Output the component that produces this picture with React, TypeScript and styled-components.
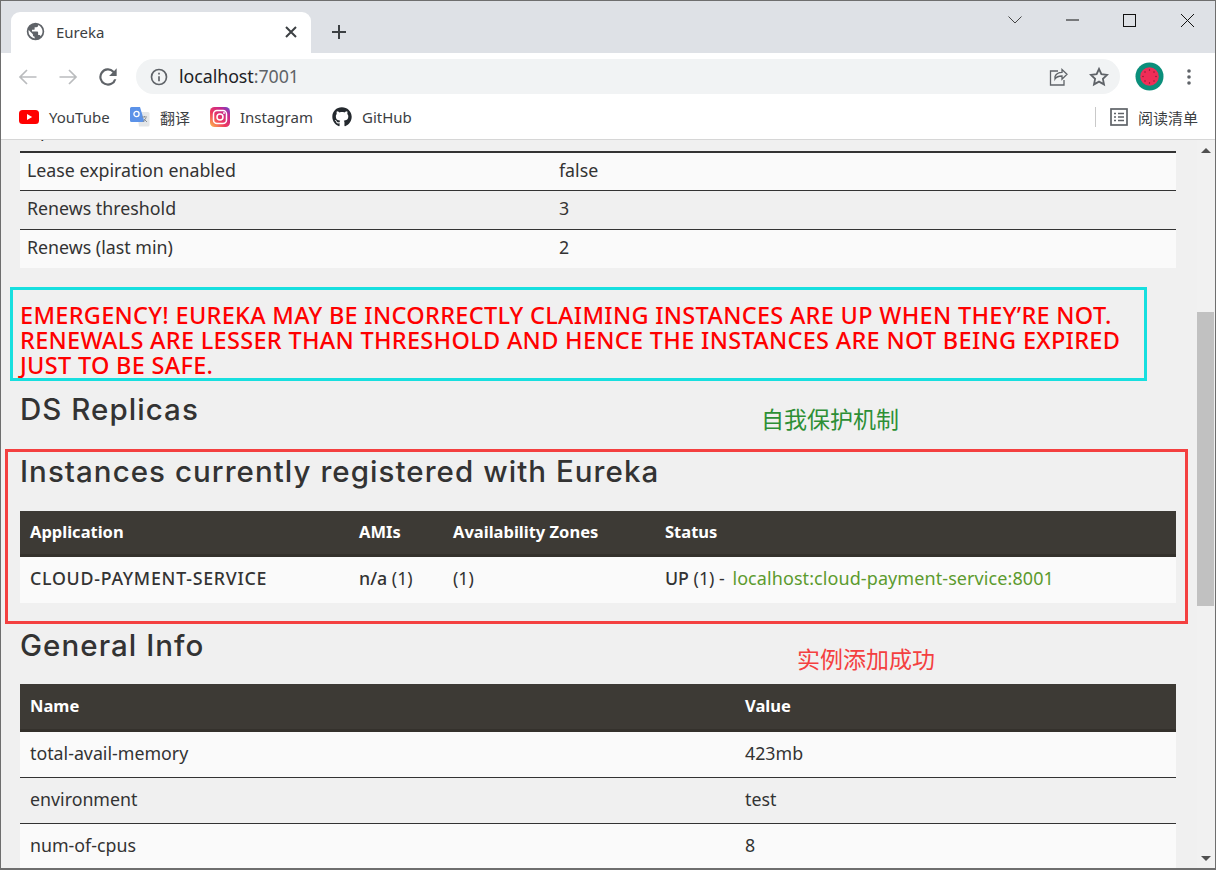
import React from "react";
import styled, { createGlobalStyle } from "styled-components";
import { FaGithub } from "react-icons/fa";

const Global = createGlobalStyle`
  html, body { margin: 0; padding: 0; height: 100%; overflow: hidden; background: #dee1e6; }
  * { box-sizing: border-box; }
`;
const UI = `"Noto Sans", "Noto Sans CJK SC", sans-serif`;
const BODY = `"Noto Sans", "Noto Sans CJK SC", sans-serif`;
const HEAD = `Inter, "Noto Sans", sans-serif`;

const Win = styled.div`
  width: 1216px; height: 870px; display: flex; flex-direction: column;
  border: 1px solid #6e6e6e; border-bottom-width: 2px; overflow: hidden; background: #fff;
`;
const TitleBar = styled.div`
  height: 52px; flex: none; background: #dee1e6; display: flex; align-items: flex-end; padding-left: 10px;
`;
const Tab = styled.div`
  width: 300px; height: 41px; background: #fff; border-radius: 9px 9px 0 0; display: flex; align-items: center;
  padding: 0 14px 2px 14px; gap: 10px; font: 15px ${UI}; color: #3c4043;
`;
const TabTitle = styled.span`flex: 1;`;
const NewTab = styled.div`width: 26px; height: 41px; margin-left: 15px; display: flex; align-items: center; justify-content: center; padding-bottom: 1px;`;
const Spacer = styled.div`flex: 1;`;
const WinControls = styled.div`align-self: flex-start; display: flex; height: 38px; align-items: center; margin-right: -1px;`;
const WinBtn = styled.div`width: 57.5px; height: 38px; display: flex; align-items: center; justify-content: center;`;

const Toolbar = styled.div`
  height: 47px; flex: none; background: #fff; display: flex; align-items: flex-start; padding: 6px 14px 0 0;
`;
const NavBtn = styled.div`width: 40px; height: 35px; display: flex; align-items: center; justify-content: center; flex: none;`;
const NavGroup = styled.div`display: flex; padding-left: 7px; width: 135px; flex: none;`;
const Omni = styled.div`
  width: 984px; height: 35px; border-radius: 18px; background: #f1f3f4; display: flex; align-items: center; padding: 0 1px 0 13px; flex: none;
`;
const Url = styled.div`font: 17.8px ${UI}; color: #202124; margin-left: 10px; padding-bottom: 1px; flex: 1; letter-spacing: -0.05px;`;
const Port = styled.span`color: #5f6368;`;
const OmniIcon = styled.div`width: 40px; height: 24px; display: flex; align-items: center; justify-content: center;`;
const Avatar = styled.div`margin-left: 15px; width: 29px; height: 35px; display: flex; align-items: center;`;
const Kebab = styled.div`margin-left: 23px; height: 35px; display: flex; align-items: center;`;

const Bookmarks = styled.div`
  height: 40px; flex: none; background: #fff; border-bottom: 1px solid #d6d6d6; display: flex; align-items: flex-start; padding: 5px 0 0 18px;
`;
const Mark = styled.div<{ $w: number }>`
  width: ${(p) => p.$w}px; display: flex; align-items: center; gap: 10px; height: 24px; font: 15px ${UI}; color: #3c4043; flex: none;
`;
const ReadSep = styled.div`width: 1px; height: 20px; background: #c9c9c9; margin: 2px 14px 0 0;`;
const ReadLabel = styled.div`display: flex; align-items: center; gap: 10px; font: 15px ${UI}; color: #3c4043; height: 24px; margin-right: 17px;`;

const Body = styled.div`flex: 1; min-height: 0; display: flex; position: relative; background: #f0f0f0;`;
const Page = styled.div`flex: 1; min-width: 0; overflow: hidden; padding: 0 20px 0 19px; background: #f0f0f0; color: #333;`;
const Scrollbar = styled.div`width: 18px; flex: none; background: #f1f1f1; display: flex; flex-direction: column; align-items: flex-start; padding-top: 8px;`;
const Thumb = styled.div`width: 17px; height: 294px; background: #c1c1c1; margin-top: 159px;`;
const Arrow = styled.div<{ $down?: boolean }>`
  width: 0; height: 0; margin-left: 4px; border-left: 5px solid transparent; border-right: 5px solid transparent;
  ${(p) => (p.$down ? "border-top: 5px solid #505050; margin-top: 250px;" : "border-bottom: 5px solid #505050;")}
`;

const Table = styled.table<{ $pull?: number }>`
  width: 1156px; border-collapse: separate; border-spacing: 0; table-layout: fixed; font: 17.8px ${BODY}; margin-top: ${(p) => p.$pull ?? 0}px;
`;
const Col = styled.col<{ $w?: number }>`${(p) => (p.$w ? `width: ${p.$w}px;` : "")}`;
const Th = styled.th<{ $h: number }>`
  height: ${(p) => p.$h}px; background: #3d3a35; color: #fff; text-align: left; padding: 0 10px 2px; font-weight: 700; border-bottom: 3px solid #34312c; font-size: 16.5px;
`;
const Row = styled.tr<{ $even?: boolean }>`background: ${(p) => (p.$even ? "#f0f0f0" : "#fafafa")};`;
const Td = styled.td<{ $h: number; $b?: number }>`
  height: ${(p) => p.$h}px; padding: 0 7px 4px; border-bottom: ${(p) => p.$b ?? 0}px solid #333; color: #333;
`;
const Cell = styled.td<{ $h: number; $b?: number }>`
  height: ${(p) => p.$h}px; padding: 0 10px 4px; border-bottom: ${(p) => p.$b ?? 0}px solid #333; color: #333;
`;
const B = styled.b`font-weight: 500;`;
const Svc = styled.b`font-weight: 500; letter-spacing: 0.75px;`;
const Link = styled.a`color: #5c9a2e; font-size: 18px; margin-left: 3px; letter-spacing: 0.08px;`;

const Alert = styled.div`
  margin-top: 35px; font: 500 23.5px/25px ${BODY}; letter-spacing: 0.3px; color: #f00; text-transform: uppercase; white-space: nowrap;
`;
const H = styled.h2<{ $mt: number }>`
  margin: ${(p) => p.$mt}px 0 0; font: 500 29.5px/40px ${HEAD}; letter-spacing: 1.05px; color: #333;
`;
const Frame = styled.div<{ $c: string; $x: number; $y: number; $w: number; $h: number }>`
  position: absolute; left: ${(p) => p.$x}px; top: ${(p) => p.$y}px; width: ${(p) => p.$w}px; height: ${(p) => p.$h}px; border: 3px solid ${(p) => p.$c}; pointer-events: none;
`;
const Note = styled.div<{ $c: string; $x: number; $y: number }>`
  position: absolute; left: ${(p) => p.$x}px; top: ${(p) => p.$y}px; color: ${(p) => p.$c}; font: 23px/30px "Noto Sans CJK SC", sans-serif; white-space: nowrap;
`;

const Globe = () => (
  <svg width="21" height="21" viewBox="0 0 24 24"><path fill="#5f6368" d="M12 2a10 10 0 1 0 0 20 10 10 0 0 0 0-20zm-1 17.900A8 8 0 0 1 4 12c0-.6.1-1.200.2-1.800L9 15v1c0 1.100.9 2 2 2v1.900zm6.900-2.500c-.3-.8-1-1.400-1.900-1.400h-1v-3c0-.6-.4-1-1-1H8v-2h2c.6 0 1-.4 1-1V7h2c1.100 0 2-.9 2-2v-.4a8 8 0 0 1 2.900 12.800z" /></svg>
);
const Stroke = ({ d, c = "#5f6368", s = 18, w = 2 }: { d: string; c?: string; s?: number; w?: number }) => (
  <svg width={s} height={s} viewBox="0 0 24 24" fill="none" stroke={c} strokeWidth={w}><path d={d} /></svg>
);

export default function App() {
  return (
    <Win>
      <Global />
      <TitleBar>
        <Tab>
          <Globe />
          <TabTitle>Eureka</TabTitle>
          <svg width="12" height="12" viewBox="0 0 12 12" stroke="#3c4043" strokeWidth="2"><path d="M1 1l10 10M11 1L1 11" /></svg>
        </Tab>
        <NewTab>
          <svg width="16" height="16" viewBox="0 0 16 16" stroke="#3c4043" strokeWidth="2"><path d="M8 1v14M1 8h14" /></svg>
        </NewTab>
        <Spacer />
        <WinControls>
          <WinBtn><svg width="14" height="8" viewBox="0 0 14 8" fill="none" stroke="#444" strokeWidth="1"><path d="M.5.5L7 7 13.500.5" /></svg></WinBtn>
          <WinBtn><svg width="13" height="2" viewBox="0 0 13 2" stroke="#111" strokeWidth="1"><path d="M0 1h13" /></svg></WinBtn>
          <WinBtn><svg width="13" height="13" viewBox="0 0 13 13" fill="none" stroke="#111" strokeWidth="1"><rect x=".5" y=".5" width="12" height="12" /></svg></WinBtn>
          <WinBtn><svg width="13" height="13" viewBox="0 0 13 13" stroke="#111" strokeWidth="1"><path d="M0 0l13 13M13 0L0 13" /></svg></WinBtn>
        </WinControls>
      </TitleBar>
      <Toolbar>
        <NavGroup>
          <NavBtn><Stroke c="#babcbe" s={24} w={1.700} d="M20.500 12H4M11 5l-7 7 7 7" /></NavBtn>
          <NavBtn><Stroke c="#babcbe" s={24} w={1.700} d="M3.500 12H20M13 5l7 7-7 7" /></NavBtn>
          <NavBtn><svg width="26" height="26" viewBox="0 0 24 24"><path fill="#5f6368" d="M17.650 6.350A8 8 0 1 0 19.730 14h-2.080a6 6 0 1 1-1.410-6.240L13 11h7V4l-2.350 2.350z" /></svg></NavBtn>
        </NavGroup>
        <Omni>
          <svg width="20" height="20" viewBox="0 0 24 24"><path fill="#5f6368" d="M11 7h2v2h-2zm0 4h2v6h-2zm1-9a10 10 0 1 0 0 20 10 10 0 0 0 0-20zm0 18a8 8 0 1 1 0-16 8 8 0 0 1 0 16z" /></svg>
          <Url>localhost<Port>:7001</Port></Url>
          <OmniIcon>
            <svg width="20" height="20" viewBox="0 0 20 20" fill="none" stroke="#5f6368" strokeWidth="1.300"><path d="M6 9.500c1.200-3 3.600-4.200 7-4.200V2.500l5 4.800-5 4.800V9c-3.200 0-5.500.6-7 3zM9 4H1.500v14H15V13" /></svg>
          </OmniIcon>
          <OmniIcon>
            <svg width="24" height="24" viewBox="0 0 24 24" fill="none" stroke="#5f6368" strokeWidth="1.800"><path d="M12 4l2.400 5.200 5.600.7-4.100 3.900 1.100 5.600-5-2.800-5 2.800 1.100-5.600L4 9.900l5.600-.7z" /></svg>
          </OmniIcon>
        </Omni>
        <Avatar>
          <svg width="29" height="29" viewBox="0 0 29 29"><circle cx="14.500" cy="14.500" r="14" fill="#0b8f7b" /><circle cx="14.500" cy="14.500" r="9.300" fill="#f02d57" /><g fill="#7a1730"><circle cx="14.500" cy="8" r=".7" /><circle cx="14.500" cy="21" r=".7" /><circle cx="8" cy="14.500" r=".7" /><circle cx="21" cy="14.500" r=".7" /><circle cx="10" cy="10" r=".7" /><circle cx="19" cy="10" r=".7" /><circle cx="10" cy="19" r=".7" /><circle cx="19" cy="19" r=".7" /></g></svg>
        </Avatar>
        <Kebab>
          <svg width="4" height="16" viewBox="0 0 4 16" fill="#5f6368"><circle cx="2" cy="2" r="1.800" /><circle cx="2" cy="8" r="1.800" /><circle cx="2" cy="14" r="1.800" /></svg>
        </Kebab>
      </Toolbar>
      <Bookmarks>
        <Mark $w={111}>
          <svg width="20" height="14" viewBox="0 0 20 14"><rect width="20" height="14" rx="3.500" fill="#f00" /><path d="M8 4l5.200 3L8 10z" fill="#fff" /></svg>
          YouTube
        </Mark>
        <Mark $w={80}>
          <svg width="20" height="20" viewBox="0 0 20 20"><path d="M7 5h11a1.500 1.500 0 0 1 1.500 1.500V18a1.500 1.500 0 0 1-1.500 1.500H9z" fill="#e4e6e8" /><path d="M1.500 0H10l4.500 15H1.500A1.500 1.500 0 0 1 0 13.500V1.500A1.500 1.500 0 0 1 1.500 0z" fill="#5b92e8" /><circle cx="6.500" cy="7" r="2.600" fill="none" stroke="#fff" strokeWidth="1.300" /><path d="M12 10h5M14.500 9v1M13 15l3-4M14 12l3 3" stroke="#8a8f94" strokeWidth="1" fill="none" /></svg>
          翻译
        </Mark>
        <Mark $w={122}>
          <svg width="20" height="20" viewBox="0 0 20 20"><defs><linearGradient id="ig" x1="0" y1="1" x2="1" y2="0"><stop offset="0" stopColor="#fdc04f" /><stop offset=".4" stopColor="#ef3a5d" /><stop offset=".75" stopColor="#c3268f" /><stop offset="1" stopColor="#5a51d3" /></linearGradient></defs><rect width="20" height="20" rx="4.500" fill="url(#ig)" /><rect x="3.500" y="3.500" width="13" height="13" rx="3.500" fill="none" stroke="#fff" strokeWidth="1.500" /><circle cx="10" cy="10" r="3" fill="none" stroke="#fff" strokeWidth="1.500" /><circle cx="14" cy="6" r=".9" fill="#fff" /></svg>
          Instagram
        </Mark>
        <Mark $w={120}>
          <FaGithub size={20} color="#24292e" />
          GitHub
        </Mark>
        <Spacer />
        <ReadSep />
        <ReadLabel>
          <svg width="18" height="18" viewBox="0 0 18 18" fill="none" stroke="#5f6368" strokeWidth="1.700"><rect x="1" y="1" width="16" height="16" /><path d="M4 5.500h2M8 5.500h6M4 9h2M8 9h6M4 12.500h2M8 12.500h6" /></svg>
          阅读清单
        </ReadLabel>
      </Bookmarks>
      <Body>
        <Page>
          <Table $pull={-27}>
            <colgroup><Col $w={529} /><Col /></colgroup>
            <tbody>
              <Row $even><Td $h={40} $b={2}>Uptime</Td><Cell $h={40} $b={2}>00:03</Cell></Row>
              <Row><Td $h={38} $b={1}>Lease expiration enabled</Td><Cell $h={38} $b={1}>false</Cell></Row>
              <Row $even><Td $h={39} $b={1}>Renews threshold</Td><Cell $h={39} $b={1}>3</Cell></Row>
              <Row><Td $h={38}>Renews (last min)</Td><Cell $h={38}>2</Cell></Row>
            </tbody>
          </Table>
          <Alert>
            Emergency! Eureka may be incorrectly claiming instances are UP when they’re not.<br />
            Renewals are lesser than threshold and hence the instances are not being expired<br />
            just to be safe.
          </Alert>
          <H $mt={11}>DS Replicas</H>
          <H $mt={22}>Instances currently registered with Eureka</H>
          <Table $pull={20}>
            <colgroup><Col $w={329} /><Col $w={94} /><Col $w={212} /><Col /></colgroup>
            <thead><tr><Th $h={46}>Application</Th><Th $h={46}>AMIs</Th><Th $h={46}>Availability Zones</Th><Th $h={46}>Status</Th></tr></thead>
            <tbody>
              <Row>
                <Cell $h={46}><Svc>CLOUD-PAYMENT-SERVICE</Svc></Cell>
                <Cell $h={46}><B>n/a</B> (1)</Cell>
                <Cell $h={46}>(1)</Cell>
                <Cell $h={46}><B>UP</B> (1) - <Link>localhost:cloud-payment-service:8001</Link></Cell>
              </Row>
            </tbody>
          </Table>
          <H $mt={22}>General Info</H>
          <Table $pull={19}>
            <colgroup><Col $w={715} /><Col /></colgroup>
            <thead><tr><Th $h={48}>Name</Th><Th $h={48}>Value</Th></tr></thead>
            <tbody>
              <Row><Cell $h={46} $b={1}>total-avail-memory</Cell><Cell $h={46} $b={1}>423mb</Cell></Row>
              <Row $even><Cell $h={46} $b={1}>environment</Cell><Cell $h={46} $b={1}>test</Cell></Row>
              <Row><Cell $h={46} $b={1}>num-of-cpus</Cell><Cell $h={46} $b={1}>8</Cell></Row>
            </tbody>
          </Table>
        </Page>
        <Scrollbar>
          <Arrow />
          <Thumb />
          <Arrow $down />
        </Scrollbar>
        <Frame $c="#17dfdf" $x={9} $y={147} $w={1137} $h={94} />
        <Frame $c="#f44040" $x={4} $y={309} $w={1183} $h={175} />
        <Note $c="#2d8f35" $x={760} $y={263}>自我保护机制</Note>
        <Note $c="#f44040" $x={796} $y={503}>实例添加成功</Note>
      </Body>
    </Win>
  );
}
